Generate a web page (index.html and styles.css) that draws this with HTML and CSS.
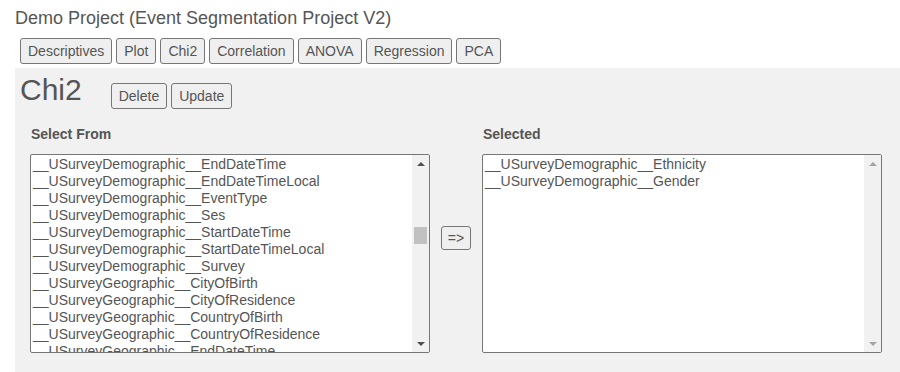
FILE: index.html
```html
<!DOCTYPE html>
<html lang="en">
<head>
  <meta charset="UTF-8">
  <title>Chi2 - Demo Project</title>
  <link rel="stylesheet" href="styles.css">
</head>
<body>
  <div class="project-title">Demo Project (Event Segmentation Project V2)</div>

  <div class="tabs">
    <button class="btn">Descriptives</button>
    <button class="btn">Plot</button>
    <button class="btn">Chi2</button>
    <button class="btn">Correlation</button>
    <button class="btn">ANOVA</button>
    <button class="btn">Regression</button>
    <button class="btn">PCA</button>
  </div>

  <div class="panel">
    <div class="panel-head">
      <h1>Chi2</h1>
      <div class="head-actions">
        <button class="btn">Delete</button>
        <button class="btn">Update</button>
      </div>
    </div>

    <div class="picker">
      <div class="column">
        <div class="label">Select From</div>
        <div class="listbox">
          <div class="options">
            <div class="option">__USurveyDemographic__EndDateTime</div>
            <div class="option">__USurveyDemographic__EndDateTimeLocal</div>
            <div class="option">__USurveyDemographic__EventType</div>
            <div class="option">__USurveyDemographic__Ses</div>
            <div class="option">__USurveyDemographic__StartDateTime</div>
            <div class="option">__USurveyDemographic__StartDateTimeLocal</div>
            <div class="option">__USurveyDemographic__Survey</div>
            <div class="option">__USurveyGeographic__CityOfBirth</div>
            <div class="option">__USurveyGeographic__CityOfResidence</div>
            <div class="option">__USurveyGeographic__CountryOfBirth</div>
            <div class="option">__USurveyGeographic__CountryOfResidence</div>
            <div class="option">__USurveyGeographic__EndDateTime</div>
          </div>
          <div class="scrollbar">
            <div class="arrow"><span class="tri-up"></span></div>
            <div class="track"><div class="thumb"></div></div>
            <div class="arrow"><span class="tri-down"></span></div>
          </div>
        </div>
      </div>

      <div class="middle">
        <button class="btn move-btn">=&gt;</button>
      </div>

      <div class="column">
        <div class="label">Selected</div>
        <div class="listbox">
          <div class="options">
            <div class="option">__USurveyDemographic__Ethnicity</div>
            <div class="option">__USurveyDemographic__Gender</div>
          </div>
          <div class="scrollbar disabled">
            <div class="arrow"><span class="tri-up"></span></div>
            <div class="track"></div>
            <div class="arrow"><span class="tri-down"></span></div>
          </div>
        </div>
      </div>
    </div>
  </div>
</body>
</html>
```

FILE: styles.css
```css
body {
  margin: 0;
  padding: 8px 0 0 15px;
  font-family: "Liberation Sans", Arial, sans-serif;
  color: #555;
  background-color: white;
}
.project-title {
  font-size: 18px;
  line-height: 21px;
  margin-bottom: 9px;
}
.tabs {
  display: flex;
  gap: 4px;
  margin-left: 5px;
}
.btn {
  font-family: "Liberation Sans", Arial, sans-serif;
  font-size: 14px;
  line-height: 16px;
  color: #555;
  background-color: #efefef;
  border: 1px solid #767676;
  border-radius: 3px;
  padding: 4px 7px;
  margin: 0;
}
.panel {
  background-color: #f1f1f1;
  margin-top: 4px;
  padding: 5px 0 30px 5px;
}
.panel-head {
  display: flex;
  align-items: flex-start;
}
.panel-head h1 {
  font-size: 30px;
  font-weight: normal;
  line-height: 34px;
  margin: 0 29px 0 0;
}
.head-actions {
  display: flex;
  gap: 4px;
  margin-top: 10px;
}
.picker {
  display: flex;
  margin: 17px 0 0 10px;
}
.column {
  width: 400px;
}
.label {
  font-size: 14px;
  font-weight: bold;
  line-height: 16px;
  margin-bottom: 12px;
  padding-left: 1px;
}
.listbox {
  display: flex;
  height: 199px;
  box-sizing: border-box;
  border: 1px solid #767676;
  border-radius: 2px;
  background-color: white;
  overflow: hidden;
}
.options {
  flex: 1;
  overflow: hidden;
  padding: 1px 0 0 2px;
  font-size: 14px;
}
.option {
  line-height: 17px;
  white-space: nowrap;
}
.scrollbar {
  width: 17px;
  background-color: #f1f1f1;
  display: flex;
  flex-direction: column;
}
.arrow {
  height: 17px;
  display: flex;
  align-items: center;
  justify-content: center;
}
.tri-up,
.tri-down {
  width: 0;
  height: 0;
  border-left: 4px solid transparent;
  border-right: 4px solid transparent;
}
.tri-up {
  border-bottom: 4px solid #505050;
}
.tri-down {
  border-top: 4px solid #505050;
}
.scrollbar.disabled .tri-up {
  border-bottom-color: #a3a3a3;
}
.scrollbar.disabled .tri-down {
  border-top-color: #a3a3a3;
}
.track {
  flex: 1;
}
.thumb {
  width: 13px;
  height: 17px;
  margin: 55px auto 0;
  background-color: #c1c1c1;
}
.middle {
  width: 52px;
  display: flex;
  justify-content: center;
  align-items: flex-start;
  padding-top: 100px;
}
.move-btn {
  padding: 3px 6px;
}
```
